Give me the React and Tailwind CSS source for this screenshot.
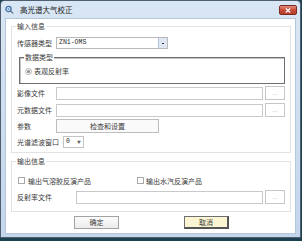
import React from "react"

const cjk = "font-['Noto_Sans_CJK_SC','Noto_Sans',sans-serif]"

function TextBox({ width }) {
  return <div className={`${width} h-[13px] bg-white border border-[#c9c9c9]`} />
}

function DotsButton() {
  return (
    <div className="w-[20px] h-[14px] bg-white border border-[#c6c6c6] flex items-center justify-center text-[6px] leading-none text-[#9a9a9a] font-['Liberation_Sans',sans-serif] tracking-[0.5px]">
      ...
    </div>
  )
}

function Label({ children, width }) {
  return <div className={`${width} text-[7px] leading-[8px] text-[#3a3a3a] whitespace-nowrap`}>{children}</div>
}

function Group({ title, children, className }) {
  return (
    <div className={`relative ml-[5px] w-[280px] border border-[#e2e2e2] ${className}`}>
      <span className="absolute -top-[5px] left-[4px] bg-white px-[1px] text-[7px] leading-[8px] text-[#3a3a3a]">{title}</span>
      {children}
    </div>
  )
}

function App() {
  return (
    <div className={`w-[302px] h-[241px] bg-[#1c4150] ${cjk}`}>
      <div className="w-[301px] h-[238px] border border-[#4f5f70] rounded-t-[4px] bg-gradient-to-b from-[#d9e6f4] to-[#c3d6ec] flex flex-col">
        {/* title bar */}
        <div className="h-[17px] flex items-start">
          <svg className="mt-[4px] ml-[4px]" width="9" height="9" viewBox="0 0 9 9">
            <circle cx="3.5" cy="4" r="2.6" fill="none" stroke="#3a6ea8" strokeWidth="1.3" />
            <circle cx="3.5" cy="4" r="1" fill="#6f9bd0" />
            <path d="M5.3 5.8 L8.2 8.4" stroke="#6b7a8a" strokeWidth="1.4" />
          </svg>
          <span className="ml-[6px] mt-[4px] text-[7.5px] leading-[9px] text-[#222]">高光谱大气校正</span>
          <div className="ml-auto mr-[3px] mt-[4px] w-[18px] h-[10px] rounded-[2px] border border-[#7a2a20] bg-gradient-to-b from-[#e38b7c] via-[#c74a37] to-[#b8402e] flex items-center justify-center">
            <svg width="6" height="5" viewBox="0 0 6 5">
              <path d="M0.8 0.6 L5.2 4.4 M5.2 0.6 L0.8 4.4" stroke="#ffffff" strokeWidth="1.3" />
            </svg>
          </div>
        </div>

        {/* client area */}
        <div className="mx-[4px] h-[216px] bg-white border border-[#b4c6da] flex flex-col">
          <Group title="输入信息" className="mt-[7px] h-[127px] pt-[10px] pl-[5px] pr-[5px]">
            <div className="flex items-center h-[12px]">
              <Label width="w-[39px]">传感器类型</Label>
              <div className="w-[112px] h-[12px] border border-[#b9b9b9] bg-white flex items-center">
                <span className="ml-[2px] text-[6.5px] leading-none text-[#2a2a2a] font-['Liberation_Mono',monospace]">ZN1-OMS</span>
                <div className="ml-auto w-[9px] h-[10px] bg-[#dfe7f2] border-l border-[#b3c3d8] flex items-center justify-center">
                  <div className="w-[2px] h-[1px] bg-[#333]" />
                </div>
              </div>
            </div>

            <div className="relative mt-[8px] ml-[2px] w-[266px] h-[27px] border border-[#6f6f6f] shadow-[inset_1px_1px_0_#c4c4c4] pt-[9px] pl-[5px]">
              <span className="absolute -top-[5px] left-[4px] bg-white px-[1px] text-[7px] leading-[8px] text-[#3a3a3a]">数据类型</span>
              <div className="flex items-center h-[8px]">
                <div className="w-[7px] h-[7px] rounded-full border border-[#b5b5b5] bg-[#f4f4f4] flex items-center justify-center">
                  <div className="w-[3px] h-[3px] rounded-full bg-[#8c8c8c]" />
                </div>
                <span className="ml-[2px] text-[7px] leading-[8px] text-[#3a3a3a]">表观反射率</span>
              </div>
            </div>

            <div className="mt-[2px] flex items-center h-[14px]">
              <Label width="w-[39px]">影像文件</Label>
              <TextBox width="w-[207px]" />
              <div className="ml-[2px]"><DotsButton /></div>
            </div>

            <div className="mt-[3px] flex items-center h-[14px]">
              <Label width="w-[39px]">元数据文件</Label>
              <TextBox width="w-[207px]" />
              <div className="ml-[2px]"><DotsButton /></div>
            </div>

            <div className="mt-[2px] flex items-center h-[14px]">
              <Label width="w-[39px]">参数</Label>
              <div className="w-[103px] h-[14px] bg-[#fafafa] border border-[#bdbdbd] flex items-center justify-center text-[7px] leading-none text-[#3a3a3a]">
                检查和设置
              </div>
            </div>

            <div className="mt-[3px] flex items-center h-[12px]">
              <Label width="w-[46px]">光谱滤波窗口</Label>
              <div className="w-[21px] h-[12px] border border-[#c3c3c3] bg-white flex items-center">
                <span className="ml-[2px] text-[6.5px] leading-none text-[#2a2a2a] font-['Liberation_Mono',monospace]">0</span>
                <span className="ml-auto mr-[2px] text-[4px] leading-none text-[#666]">▼</span>
              </div>
            </div>
          </Group>

          <Group title="输出信息" className="mt-[8px] h-[51px] pt-[14px] pl-[5px] pr-[5px]">
            <div className="flex items-center h-[9px]">
              <div className="ml-[1px] w-[7px] h-[7px] border border-[#a9a9a9] bg-white" />
              <span className="ml-[3px] text-[7px] leading-[8px] text-[#3a3a3a]">输出气溶胶反演产品</span>
              <div className="ml-[46px] w-[7px] h-[7px] border border-[#a9a9a9] bg-white" />
              <span className="ml-[2px] text-[7px] leading-[8px] text-[#3a3a3a]">输出水汽反演产品</span>
            </div>
            <div className="mt-[5px] flex items-center h-[14px]">
              <Label width="w-[59px]">反射率文件</Label>
              <TextBox width="w-[187px]" />
              <div className="ml-[2px]"><DotsButton /></div>
            </div>
          </Group>

          <div className="mt-[4px] ml-[68px] flex items-center gap-[65px]">
            <div className="w-[45px] h-[13px] border border-[#a3a3a3] bg-gradient-to-b from-[#fbfbfb] to-[#ececec] flex items-center justify-center text-[7px] leading-none text-[#3a3a3a]">
              确定
            </div>
            <div className="w-[45px] h-[13px] border border-[#6e6e6e] border-r-2 border-b-2 border-r-[#555] border-b-[#555] bg-[#fbf5d3] flex items-center justify-center text-[7px] leading-none text-[#3a3a3a]">
              取消
            </div>
          </div>
        </div>
      </div>
    </div>
  )
}

export default App
